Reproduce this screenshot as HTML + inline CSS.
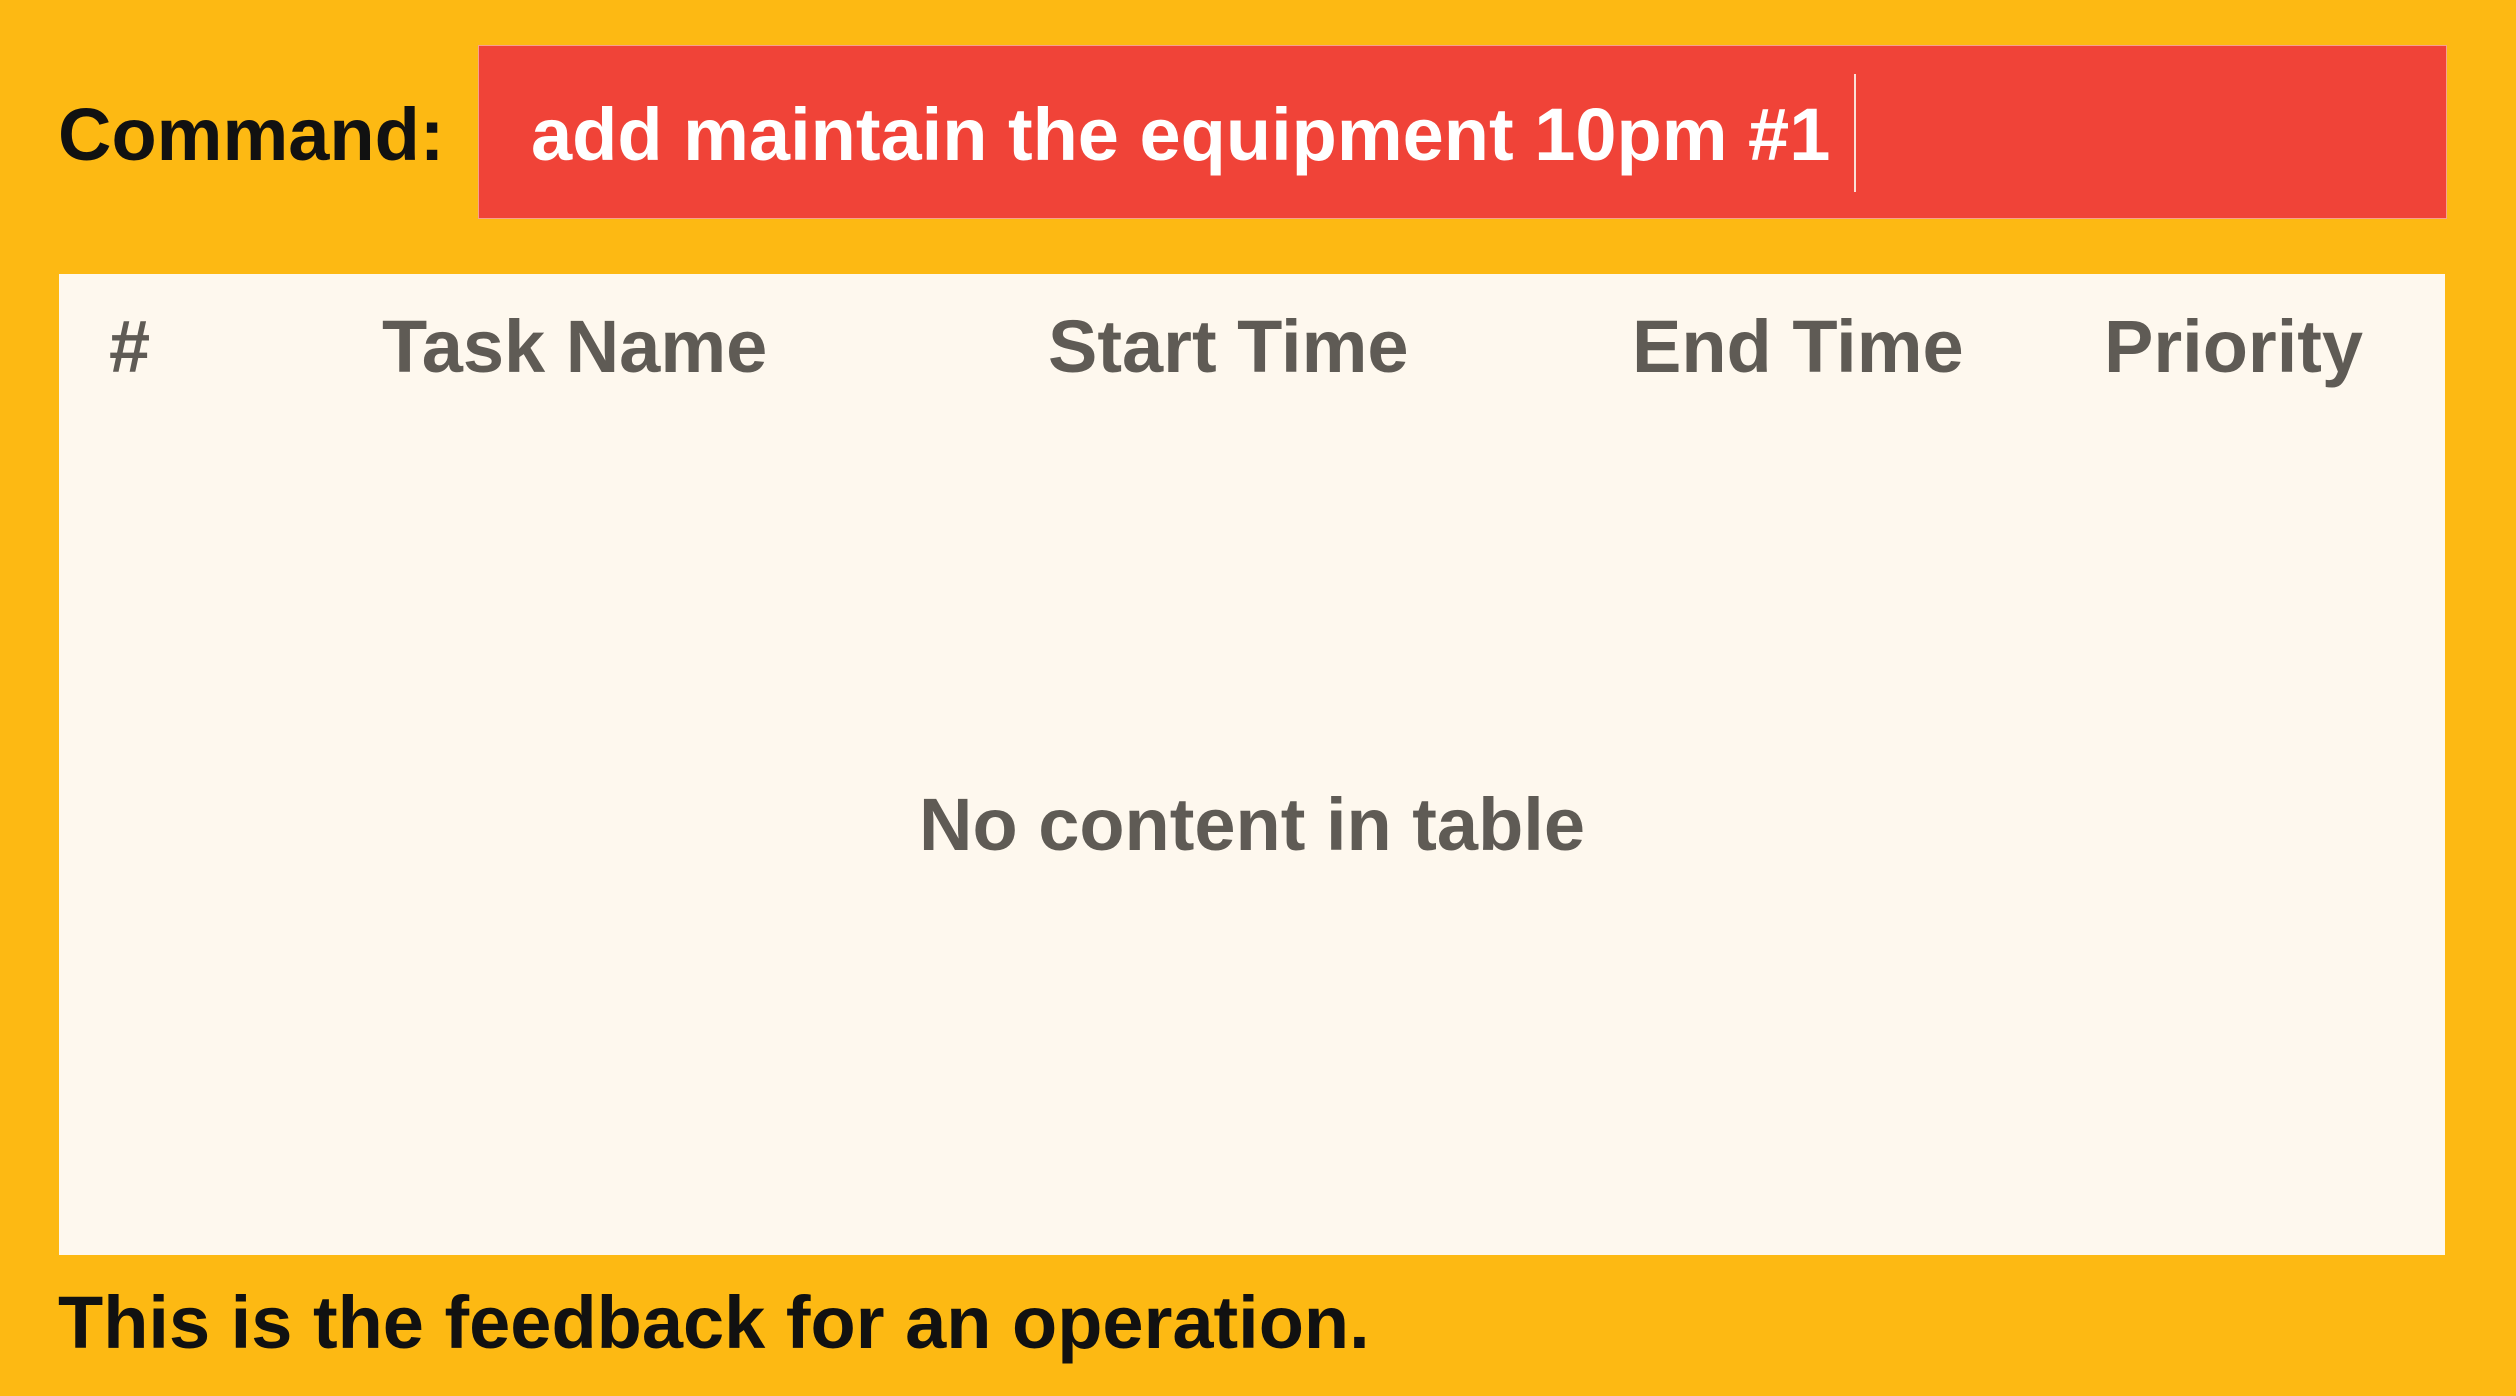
<!DOCTYPE html>
<html><head><meta charset="utf-8"><style>
html,body{margin:0;padding:0}
body{width:2516px;height:1396px;background:#FDB913;position:relative;overflow:hidden;font-family:"Liberation Sans",sans-serif}
.t{position:absolute;font-size:74px;line-height:74px;white-space:nowrap;font-weight:bold}
#inp{position:absolute;left:478px;top:45px;width:1969px;height:174px;background:#F04338;border:1px solid #f7a08f;box-sizing:border-box}
#tbl{position:absolute;left:59px;top:274px;width:2386px;height:981px;background:#FEF8EE}
.h{color:#5f5b55}
</style></head><body>
<div class="t" style="left:58px;top:98px;color:#111">Command:</div>
<div id="inp"></div>
<div class="t" style="left:531px;top:98px;color:#fff">add maintain the equipment 10pm #1</div>
<div style="position:absolute;left:1854px;top:74px;width:2px;height:118px;background:#fbe0d8"></div>
<div id="tbl"></div>
<div class="t h" style="left:109px;top:310px">#</div>
<div class="t h" style="left:382px;top:310px">Task Name</div>
<div class="t h" style="left:1048px;top:310px">Start Time</div>
<div class="t h" style="left:1632px;top:310px">End Time</div>
<div class="t h" style="left:2104px;top:310px">Priority</div>
<div class="t h" style="left:59px;width:2386px;text-align:center;top:788px">No content in table</div>
<div class="t" style="left:58px;top:1286px;color:#111">This is the feedback for an operation.</div>
</body></html>
